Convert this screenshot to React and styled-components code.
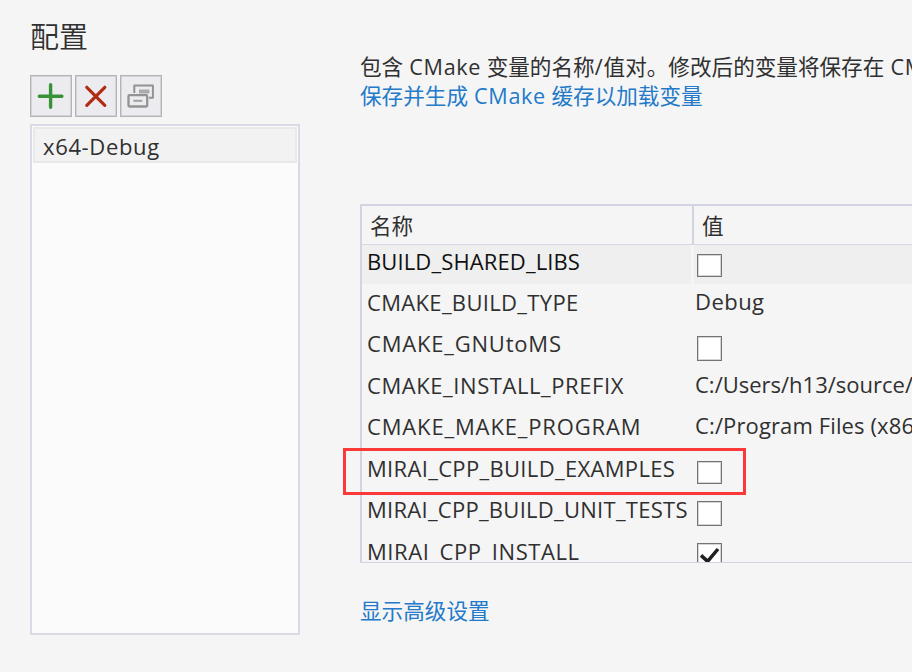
import React from "react";
import styled, { createGlobalStyle } from "styled-components";

const GlobalStyle = createGlobalStyle`
  *, *::before, *::after { box-sizing: border-box; }
  body {
    margin: 0;
    width: 912px;
    height: 672px;
    overflow: hidden;
    background: #f5f5f5;
    color: #303030;
    font-family: "Open Sans", "Noto Sans CJK SC", sans-serif;
  }
`;

const Page = styled.main`
  position: relative;
  display: flex;
  width: 912px;
  height: 672px;
  overflow: hidden;
  white-space: nowrap;
`;

const Sidebar = styled.aside`
  display: flex;
  flex-direction: column;
  flex: none;
  width: 270px;
  margin-left: 30px;
`;

const Heading = styled.h1`
  margin: 14px 0 0;
  height: 61px;
  font-family: "Noto Sans CJK SC", sans-serif;
  font-size: 29px;
  line-height: 42px;
  font-weight: 350;
`;

const Toolbar = styled.div`
  display: flex;
  gap: 3px;
`;

const ToolButton = styled.button`
  display: block;
  width: 42px;
  height: 42px;
  padding: 0;
  border: 1px solid #b4b4b6;
  box-shadow: inset 0 0 0 1px #d4d4d8;
  background: #ececf0;
  svg { display: block; width: 40px; height: 40px; }
`;

const ConfigList = styled.div`
  height: 511px;
  width: 270px;
  margin-top: 7px;
  padding: 1px;
  border: 2px solid #dadae6;
  background: #fbfbfb;
`;

const ConfigItem = styled.div`
  height: 36px;
  padding-left: 8px;
  border: 2px solid #e8e8e8;
  background: #f2f2f2;
  font-size: 22px;
  line-height: 34px;
  letter-spacing: ${(p) => p.$track}px;
`;

const Content = styled.section`
  display: flex;
  flex-direction: column;
  flex: none;
  width: 640px;
  margin-left: 60px;
`;

const Description = styled.p`
  margin: 52px 0 0;
  height: 29px;
  line-height: 29px;
  font-size: 21.6px;
`;

const Latin = styled.span`
  margin-left: 0.5px;
  letter-spacing: 0.65px;
`;

const Slash = styled.span`
  margin-right: 1px;
`;

const Link = styled.a`
  height: 29px;
  line-height: 29px;
  font-size: 21.6px;
  color: #237ac9;
`;

const Table = styled.div`
  width: 640px;
  height: 359px;
  margin: 94px 0 33px;
  overflow: hidden;
  border: solid #d3d4e1;
  border-width: 2px 0 1px 2px;
`;

const HeaderRow = styled.div`
  display: grid;
  grid-template-columns: 332px 1fr;
  height: 39px;
  border-bottom: 1px solid #d8d8e2;
  font-size: 21.6px;
  line-height: 39px;
`;

const HeaderCell = styled.div`
  padding-left: 8px;
  border-right: ${(p) => (p.$divided ? "2px solid #d3d4e1" : "0")};
`;

const Row = styled.div`
  display: grid;
  grid-template-columns: 329px 1fr;
  column-gap: 3px;
  height: ${(p) => p.$height}px;
  color: ${(p) => (p.$selected ? "#111" : "#303030")};
`;

const Cell = styled.div`
  height: 39px;
  padding-left: ${(p) => (p.$value ? 1 : 5)}px;
  background: ${(p) => (p.$selected ? "#efefef" : "transparent")};
  font-size: 22px;
  line-height: 30px;
  padding-top: ${(p) => p.$top}px;
  letter-spacing: ${(p) => p.$track || 0}px;
`;

const Box = styled.span`
  display: block;
  width: 25px;
  height: ${(p) => p.$height}px;
  margin-left: 2px;
  border: 1px solid #747474;
  box-shadow: inset 0 0 0 1px #d5d5d5;
  background: #fff;
  svg { display: block; width: 23px; height: 23px; }
`;

const Highlight = styled.div`
  position: absolute;
  left: 343px;
  top: 448px;
  width: 403px;
  height: 47px;
  border: 3px solid #fc3939;
`;

const AddIcon = () => (
  <svg viewBox="0 0 40 40" fill="none" stroke="#389338" strokeWidth="3.4" strokeLinecap="round">
    <path d="M19.6 8.8v22.4M8.3 20.2h22.6" />
  </svg>
);

const RemoveIcon = () => (
  <svg viewBox="0 0 40 40" fill="none" stroke="#b02c12" strokeWidth="3.2" strokeLinecap="round">
    <path d="M10.8 11.3l18 18M28.8 11.3l-18 18" />
  </svg>
);

const CloneIcon = () => (
  <svg viewBox="0 0 40 40" fill="none" stroke="#929292" strokeWidth="2" strokeLinejoin="round">
    <path d="M13.3 17V9.5h18.6v12.2h-4" />
    <path d="M18 14.5h9.5v3M18 16.5h9" stroke="#aaa" />
    <rect x="7.5" y="19.2" width="18.7" height="11.3" rx="1" strokeWidth="2.3" />
    <path d="M12.3 24.8h9" stroke="#a0a0a0" />
  </svg>
);

const CheckIcon = () => (
  <svg viewBox="0 0 23 23" fill="none" stroke="#202020" strokeWidth="3.5">
    <path d="M3 11.4l6.6 6L20 5" />
  </svg>
);

const variables = [
  { name: "BUILD_SHARED_LIBS", track: 0.12, kind: "bool", height: 41, top: 9, box: 23, selected: true },
  { name: "CMAKE_BUILD_TYPE", track: 0.33, value: "Debug", valueTrack: 0.45, height: 41 },
  { name: "CMAKE_GNUtoMS", track: 0.8, kind: "bool", height: 42, top: 9, box: 25 },
  { name: "CMAKE_INSTALL_PREFIX", track: 0.57, value: "C:/Users/h13/source/repos", height: 41 },
  { name: "CMAKE_MAKE_PROGRAM", track: 0.85, value: "C:/Program Files (x86)", valueTrack: 0.12, height: 42 },
  { name: "MIRAI_CPP_BUILD_EXAMPLES", track: 0.33, kind: "bool", height: 41, top: 9, box: 23 },
  { name: "MIRAI_CPP_BUILD_UNIT_TESTS", track: 0.27, kind: "bool", height: 42, top: 8, box: 25 },
  { name: "MIRAI_CPP_INSTALL", track: 0.57, kind: "bool", height: 41, top: 8, box: 25, checked: true },
];

function VariableRow({ item }) {
  return (
    <Row $height={item.height} $selected={item.selected}>
      <Cell $top={1} $selected={item.selected} $track={item.track}>{item.name}</Cell>
      <Cell $value $top={item.kind ? item.top : 0} $selected={item.selected} $track={item.valueTrack}>
        {item.kind ? <Box $height={item.box}>{item.checked && <CheckIcon />}</Box> : item.value}
      </Cell>
    </Row>
  );
}

export default function App() {
  return (
    <Page>
      <GlobalStyle />
      <Sidebar>
        <Heading>配置</Heading>
        <Toolbar>
          <ToolButton aria-label="添加"><AddIcon /></ToolButton>
          <ToolButton aria-label="删除"><RemoveIcon /></ToolButton>
          <ToolButton aria-label="克隆"><CloneIcon /></ToolButton>
        </Toolbar>
        <ConfigList>
          <ConfigItem $track={0.65}>x64-Debug</ConfigItem>
        </ConfigList>
      </Sidebar>
      <Content>
        <Description>
          包含 <Latin>CMake</Latin> 变量的名称<Slash>/</Slash>值对。修改后的变量将保存在 <Latin>CMake</Latin>
        </Description>
        <Link>保存并生成 <Latin>CMake</Latin> 缓存以加载变量</Link>
        <Table>
          <HeaderRow>
            <HeaderCell $divided>名称</HeaderCell>
            <HeaderCell>值</HeaderCell>
          </HeaderRow>
          {variables.map((item) => <VariableRow key={item.name} item={item} />)}
        </Table>
        <Link>显示高级设置</Link>
      </Content>
      <Highlight />
    </Page>
  );
}
